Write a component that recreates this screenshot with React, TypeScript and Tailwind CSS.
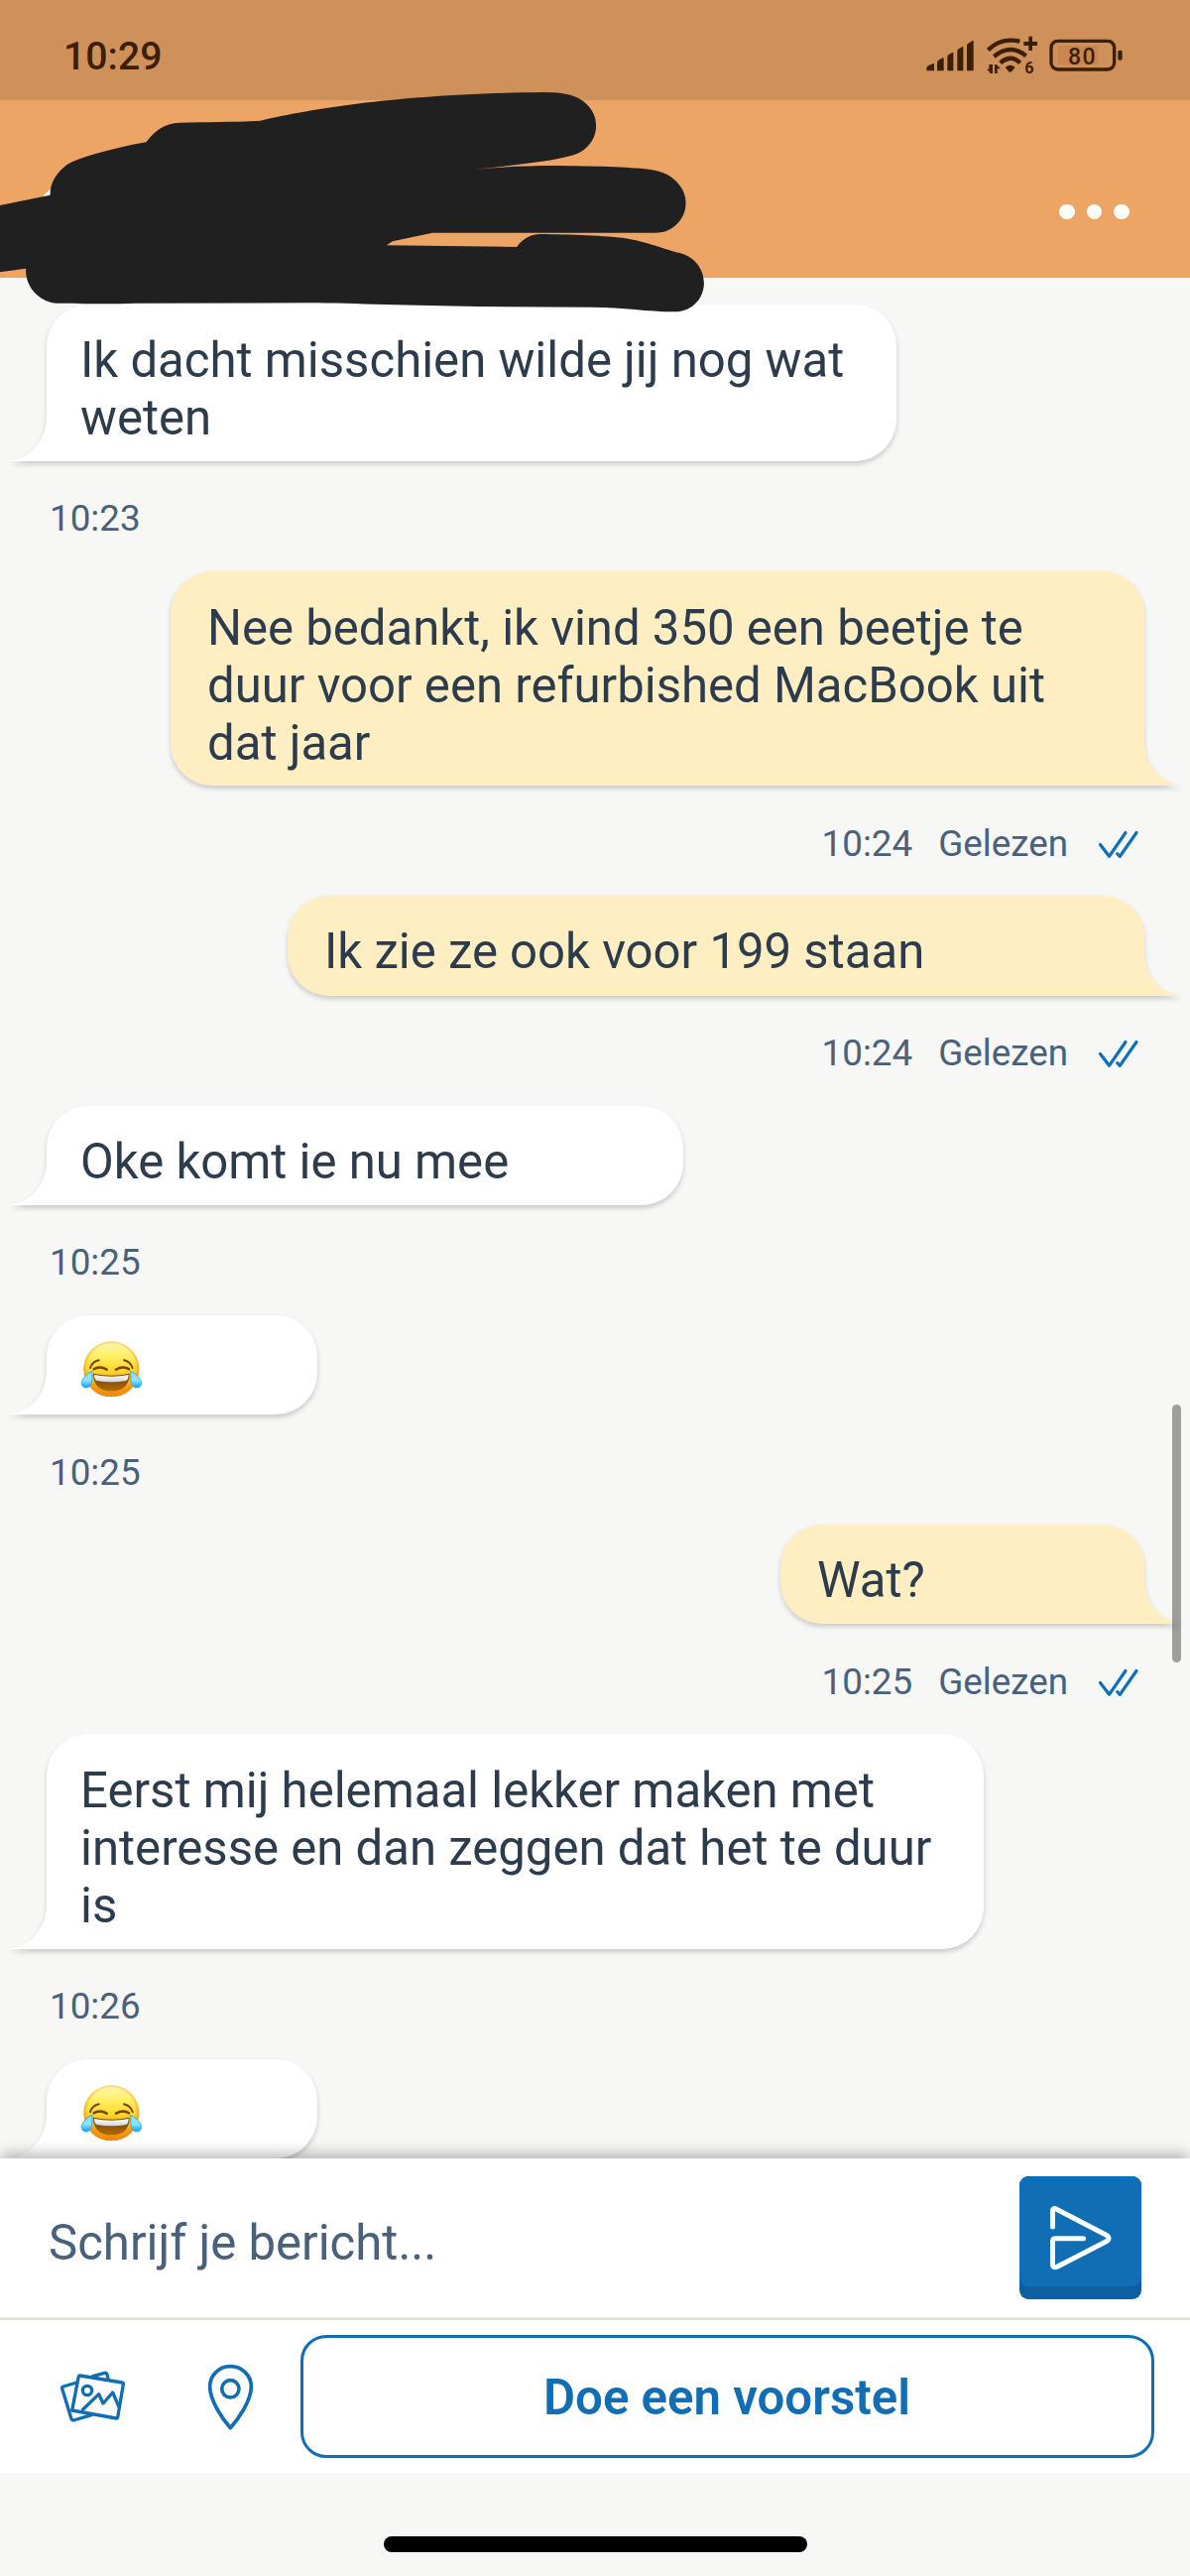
import React from "react";

type Message = {
  side: "in" | "out";
  lines: string[];
  width: string;
  time: string;
  emoji?: boolean;
};

const messages: Message[] = [
  { side: "in", lines: ["Ik dacht misschien wilde jij nog wat", "weten"], width: "w-[857px]", time: "10:23" },
  {
    side: "out",
    lines: ["Nee bedankt, ik vind 350 een beetje te", "duur voor een refurbished MacBook uit", "dat jaar"],
    width: "w-[982px]",
    time: "10:24",
  },
  { side: "out", lines: ["Ik zie ze ook voor 199 staan"], width: "w-[864px]", time: "10:24" },
  { side: "in", lines: ["Oke komt ie nu mee"], width: "w-[642px]", time: "10:25" },
  { side: "in", lines: [], emoji: true, width: "w-[273px]", time: "10:25" },
  { side: "out", lines: ["Wat?"], width: "w-[367px]", time: "10:25" },
  {
    side: "in",
    lines: ["Eerst mij helemaal lekker maken met", "interesse en dan zeggen dat het te duur", "is"],
    width: "w-[945px]",
    time: "10:26",
  },
  { side: "in", lines: [], emoji: true, width: "w-[273px]", time: "" },
];

function JoyEmoji() {
  return (
    <svg role="img" aria-label="😂" viewBox="0 0 186 176" className="h-[58.7px] w-[62px]">
      <defs>
        <linearGradient id="face" x1="0" y1="0" x2="0" y2="1">
          <stop offset="0" stopColor="#fff6b0" />
          <stop offset="0.25" stopColor="#fff06a" />
          <stop offset="0.5" stopColor="#ffd92c" />
          <stop offset="0.75" stopColor="#fbac18" />
          <stop offset="1" stopColor="#e8820c" />
        </linearGradient>
        <radialGradient id="rim" cx="0.5" cy="0.47" r="0.53">
          <stop offset="0.8" stopColor="#f59a0a" stopOpacity="0" />
          <stop offset="1" stopColor="#f0890a" stopOpacity="0.95" />
        </radialGradient>
        <linearGradient id="mouth" x1="0" y1="0" x2="0" y2="1">
          <stop offset="0" stopColor="#6d3f00" />
          <stop offset="1" stopColor="#b06a08" />
        </linearGradient>
        <linearGradient id="teeth" x1="0" y1="0" x2="0" y2="1">
          <stop offset="0" stopColor="#ffffff" />
          <stop offset="1" stopColor="#d3d3dc" />
        </linearGradient>
        <linearGradient id="tear" x1="0" y1="0" x2="0" y2="1">
          <stop offset="0" stopColor="#8adcf8" />
          <stop offset="0.55" stopColor="#8fe3ff" />
          <stop offset="1" stopColor="#0a9cf8" />
        </linearGradient>
      </defs>
      <circle cx="94" cy="88" r="84" fill="url(#face)" />
      <circle cx="94" cy="88" r="84" fill="url(#rim)" />
      <g fill="none" stroke="#7a4400" strokeWidth="6" strokeLinecap="round">
        <path d="M30 84 Q37 65 56 61" />
        <path d="M158 84 Q151 65 132 61" />
        <path d="M41 88 Q58 76 80 89" strokeWidth="7.5" />
        <path d="M108 89 Q130 76 147 88" strokeWidth="7.5" />
      </g>
      <path d="M39 101 Q94 113 149 101 Q148 154 94 154 Q40 154 39 101Z" fill="url(#mouth)" />
      <path d="M42 105 Q94 115 146 105 Q146 119 138 123 Q94 131 50 123 Q42 119 42 105Z" fill="url(#teeth)" />
      <path d="M36 94 Q24 98 13 111 C-4 129 4 144 18 144 C35 144 36 124 36 94Z" fill="url(#tear)" stroke="#1fa8f4" strokeWidth="2.5" />
      <path d="M152 94 Q164 98 175 111 C192 129 184 144 170 144 C153 144 152 124 152 94Z" fill="url(#tear)" stroke="#1fa8f4" strokeWidth="2.5" />
    </svg>
  );
}

function Tail({ side }: { side: "in" | "out" }) {
  const out = side === "out";
  return (
    <svg
      viewBox="0 0 42 46"
      className={
        out
          ? "absolute right-[-40px] bottom-0 h-[46px] w-[42px] -scale-x-100 text-[#ffeec2]"
          : "absolute bottom-0 left-[-40px] h-[46px] w-[42px] text-white"
      }
    >
      <path d="M40 0 C40 26 24 44 0 46 H42 V0Z" fill="currentColor" />
    </svg>
  );
}

function ReadTicks() {
  return (
    <svg viewBox="0 0 42 30" className="ml-[30px] h-[30px] w-[42px]" fill="none" stroke="#0f6fb8" strokeWidth="3.2" strokeLinecap="round" strokeLinejoin="round">
      <path d="M2.5 15.5 L11.5 27.3 L28 3.5" />
      <path d="M19.7 24.7 L22.3 27.3 L39 3.5" />
    </svg>
  );
}

function Row({ m }: { m: Message }) {
  const out = m.side === "out";
  return (
    <div className={out ? "flex flex-col items-end pr-[46px]" : "flex flex-col items-start pl-[47px]"}>
      <div className={`relative ${m.width} [filter:drop-shadow(0_3px_2.5px_rgba(0,0,0,0.18))]`}>
        <div
          className={`${m.lines.length > 1 ? "pt-[27.8px] pb-[14.5px]" : "pt-[27px] pb-[15.3px]"} ${
            out ? "rounded-[42px] rounded-br-none bg-[#ffeec2] pl-[37px]" : "rounded-[42px] rounded-bl-none bg-white pl-[34px]"
          }`}
        >
          {m.emoji ? (
            <div className="flex h-[58px] items-center pb-[2.6px]">
              <JoyEmoji />
            </div>
          ) : (
            m.lines.map((l) => (
              <p key={l} className="h-[58px] text-[49.1px] leading-[58px] whitespace-nowrap text-[#2d3c4d]">
                {l}
              </p>
            ))
          )}
        </div>
        <Tail side={m.side} />
      </div>
      {m.time && (
        <div
          className={
            out
              ? "flex h-[111px] items-center pt-[6px] pr-[5px] text-[36.8px] leading-[44px] text-[#4a617b]"
              : "flex h-[111px] items-center pt-[6px] pl-[3px] text-[36.8px] leading-[44px] text-[#4a617b]"
          }
        >
          <span>{m.time}</span>
          {out && (
            <>
              <span className="ml-[26px]">Gelezen</span>
              <ReadTicks />
            </>
          )}
        </div>
      )}
    </div>
  );
}

function StatusIcons() {
  return (
    <svg viewBox="160 105 600 125" className="h-[41.67px] w-[200px]" fill="#3d1f05">
      <path d="M164 214 V206 Q164 201 170 198 L184 192 Q187 191 187 195 V214Z" />
      <path d="M196 214 V189 Q196 185 200 182 L213 175 Q216 174 216 178 V214Z" />
      <path d="M227 214 V172 Q227 167 231 165 L242 159 Q245 157 245 161 V214Z" />
      <path d="M257 214 V155 Q257 150 261 148 L272 142 Q275 140 275 144 V214Z" />
      <path d="M286 214 V138 Q286 133 290 131 L302 124 Q306 122 306 126 V214Z" />
      <g fill="none" stroke="#3d1f05" strokeWidth="13">
        <path d="M350 151 Q390 112 446 125" />
        <path d="M368 171 Q418 130 465 169" />
        <path d="M387 190 Q418 163 447 190" />
      </g>
      <path d="M402 204 Q417 190 432 204 L421 217 Q417 220 413 217Z" />
      <path d="M473 110 H484 V126 H499 V138 H484 V153 H473 V138 H458 V126 H473Z" />
      <path d="M359 195 V222 L346 209 H353 V195 M355 195 H364 V222 H355Z M370 222 V195 H375 L388 208 H378 V222Z" />
      <text x="461" y="221" fontFamily="Roboto, sans-serif" fontSize="49" fontWeight="700">6</text>
      <rect x="562" y="138" width="121" height="58" fill="#c98650" />
      <rect x="541" y="124" width="191" height="86" rx="20" fill="none" stroke="#3d1f05" strokeWidth="10" />
      <rect x="743" y="152" width="13" height="30" rx="5" />
      <text x="592" y="195" fontFamily="Roboto, sans-serif" fontSize="69" fontWeight="500" letterSpacing="4">80</text>
    </svg>
  );
}

/* Marker strokes hiding the contact's name and avatar */
function Redaction() {
  return (
    <svg viewBox="0 0 1568 1020" preserveAspectRatio="none" className="pointer-events-none absolute top-0 left-0 z-10 h-[340px] w-[720px]">
      <path d="M95 592 L111 572 V600Z" fill="#fff" />
      <path
        fill="#202020"
        d="M0 621 L110 590 C110 560 118 530 145 500 C170 478 240 450 321 430 C340 395 360 373 395 371 C460 369 520 370 572 365 C700 325 880 285 1190 279 C1240 279 1262 288 1280 305 C1300 327 1309 350 1309 381 C1309 412 1298 440 1275 460 C1240 487 1110 502 1042 512 C1100 505 1160 501 1220 501 C1300 502 1380 505 1425 512 C1455 518 1470 528 1485 548 C1500 570 1506 590 1506 615 C1506 645 1495 670 1478 688 C1465 700 1455 704 1440 704 L950 704 L862 730 L849 742 L1135 747 C1145 727 1160 710 1185 708 C1250 709 1330 712 1380 722 C1420 732 1440 745 1495 766 C1530 780 1546 820 1546 857 C1546 895 1525 943 1480 943 C1420 942 1370 930 1300 929 L1050 927 C900 925 780 917 680 916 L300 917 C240 920 170 918 125 917 C90 915 54 870 57 812 L0 823Z"
      />
    </svg>
  );
}

export default function App() {
  return (
    <div className="relative flex h-[2597px] w-[1200px] flex-col overflow-hidden bg-[#f7f7f5] font-[Roboto,sans-serif]">
      <div className="flex h-[101px] shrink-0 items-start justify-between bg-[#ce915a] pr-[67px] pl-[64px]">
        <span className="pt-[34px] text-[39.2px] leading-[46px] font-medium text-[#3d1f05]">10:29</span>
        <div className="pt-[35px]">
          <StatusIcons />
        </div>
      </div>
      <header className="flex h-[180px] shrink-0 items-start justify-end gap-[12px] border-b border-[#fdf1e6] bg-[#eda566] pt-[104.5px] pr-[61px]">
        <span className="size-[15.7px] rounded-full bg-[#fcfcfb]" />
        <span className="size-[15.7px] rounded-full bg-[#fcfcfb]" />
        <span className="size-[15.7px] rounded-full bg-[#fcfcfb]" />
      </header>
      <Redaction />

      <main className="relative h-[1895px] shrink-0 overflow-hidden pt-[25.7px]">
        {messages.map((m, i) => (
          <Row key={i} m={m} />
        ))}
        <div className="absolute top-[1135px] right-[9px] h-[260px] w-[9px] rounded-full bg-black/36" />
      </main>

      <section className="relative flex h-[163px] shrink-0 items-center justify-between border-b-[3px] border-[#e4e5df] bg-white pr-[49px] pl-[49px] shadow-[0_-6px_14px_-2px_rgba(0,0,0,0.3)]">
        <span className="pt-[10px] text-[49.1px] leading-[58px] text-[#4a617b]">Schrijf je bericht...</span>
        <div className="h-[123.5px] w-[123px] rounded-[9px] bg-[#1060a1]">
          <div className="flex h-[111px] items-center justify-center rounded-[9px] bg-[#116db4]">
            <svg viewBox="0 0 70 70" className="mt-[8px] h-[70px] w-[70px]" fill="none" stroke="#fff" strokeWidth="5" strokeLinecap="round" strokeLinejoin="round">
              <path d="M6.5 26 V10.5 Q6.5 6 11 8.5 L60.5 34.2 Q65.5 37.5 60.5 40.8 L11 66.2 Q6.5 68 6.5 64 V40.5 Q6.5 37.7 9.5 37.7 H37.5" />
            </svg>
          </div>
        </div>
      </section>

      <section className="relative flex h-[154px] shrink-0 items-center bg-white pr-[36.5px] pl-[60px]">
        <svg viewBox="180 265 200 162" className="h-[54px] w-[66.7px] shrink-0" fill="none" stroke="#116db4" strokeWidth="10" strokeLinejoin="round" strokeLinecap="round">
          <path d="M327 292 L324 279 Q322 273 316 275 L280 285 M232 304 L191 316 Q187 317 188 322 L216 414 Q218 419 223 418 L277 402" />
          <path d="M238 285 Q239 282 243 283 L370 304 Q374 305 373 309 L356 409 Q355 413 351 412 L218 388Z" />
          <circle cx="264" cy="328" r="14" />
          <path d="M248 388 L299 339 L312 367 L341 334 L360 378" strokeLinecap="butt" />
        </svg>
        <svg viewBox="624 244 146 206" className="ml-[81.3px] h-[68.7px] w-[48.7px] shrink-0" fill="none" stroke="#116db4" strokeWidth="11" strokeLinejoin="round">
          <path d="M697 441 C676 418 635 360 635 317 C635 282 662 255 697 255 C732 255 760 282 760 317 C760 360 718 418 697 441Z" />
          <circle cx="697" cy="323" r="26" />
        </svg>
        <div className="ml-auto flex h-[123.5px] w-[861px] items-center justify-center rounded-[26px] border-3 border-[#116db4] pt-px text-[49.2px] leading-[58px] font-semibold text-[#116db4]">
          Doe een voorstel
        </div>
      </section>

      <footer className="flex flex-1 items-start justify-center pt-[64px]">
        <div className="h-[16px] w-[427px] rounded-full bg-black" />
      </footer>
    </div>
  );
}
